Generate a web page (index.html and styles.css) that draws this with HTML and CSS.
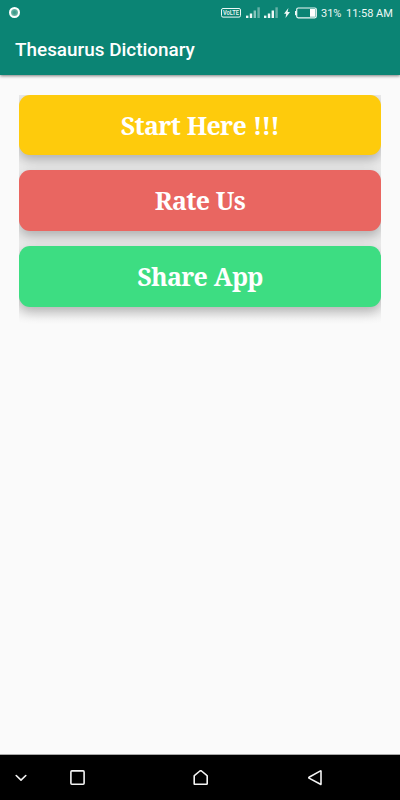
FILE: index.html
```html
<!DOCTYPE html>
<html lang="en">
  <head>
    <meta charset="UTF-8" />
    <meta name="viewport" content="width=device-width, initial-scale=1.0" />
    <title>Thesaurus Dictionary</title>
    <link rel="stylesheet" href="styles.css">
  </head>
  <body>
    <header class="app-bar">
      <div class="status-bar">
        <span class="status-dot"></span>
        <div class="status-icons">
          <svg class="volte" width="20" height="10" viewBox="0 0 20 10">
            <rect x="0.5" y="0.5" width="19" height="8.6" rx="1.5" fill="none" stroke="currentColor" />
            <text x="2" y="7.4" textLength="16" lengthAdjust="spacingAndGlyphs">VoLTE</text>
          </svg>
          <svg class="signal" width="14" height="12" viewBox="0 0 14 12" fill="currentColor">
            <rect x="0" y="8.6" width="2.4" height="2.4" />
            <rect x="3.8" y="6.5" width="2.4" height="4.5" />
            <rect x="7.6" y="3.5" width="2.4" height="7.5" opacity="0.55" />
            <rect x="11.4" y="0.3" width="2.4" height="10.7" opacity="0.4" />
          </svg>
          <svg class="signal second" width="14" height="12" viewBox="0 0 14 12" fill="currentColor">
            <rect x="0" y="8.6" width="2.4" height="2.4" />
            <rect x="3.8" y="6.5" width="2.4" height="4.5" />
            <rect x="7.6" y="3.5" width="2.4" height="7.5" />
            <rect x="11.4" y="0.3" width="2.4" height="10.7" opacity="0.4" />
          </svg>
          <svg class="bolt" width="6" height="10" viewBox="0 0 6 10" fill="currentColor">
            <path d="M4.4 0 0 5.8h2.2L1.5 10 6 4H3.6z" />
          </svg>
          <svg class="battery" width="22" height="12" viewBox="0 0 22 12">
            <rect x="1.7" y="1" width="19.6" height="9.8" rx="1.5" fill="none" stroke="currentColor" stroke-width="1.2" />
            <rect x="0" y="4" width="1.6" height="4.2" fill="currentColor" />
            <rect x="15" y="2" width="5.4" height="7.8" fill="#fff" />
          </svg>
          <span class="percent">31%</span>
          <span class="clock">11:58 AM</span>
        </div>
      </div>
      <h1>Thesaurus Dictionary</h1>
    </header>

    <main>
      <div class="menu">
        <button type="button" class="card start"><span>Start Here !!!</span></button>
        <button type="button" class="card rate"><span>Rate Us</span></button>
        <button type="button" class="card share"><span>Share App</span></button>
      </div>
    </main>

    <nav class="nav-bar">
      <svg class="nav-hide" width="12" height="8" viewBox="0 0 12 8">
        <path d="M1.2 1.5 6 6.1l4.8-4.6" />
      </svg>
      <svg class="nav-recent" width="15" height="16" viewBox="0 0 15 16">
        <rect x="0.9" y="0.9" width="13.2" height="13.4" rx="1" />
      </svg>
      <svg class="nav-home" width="16" height="16" viewBox="0 0 16 16">
        <path d="M1.2 6Q1.2 5.6 1.6 5.3L6.9 1q.8-.6 1.6 0l5.3 4.3q.4.3.4.7v7.7q0 .6-.6.6H1.8q-.6 0-.6-.6z" />
      </svg>
      <svg class="nav-back" width="15" height="16" viewBox="0 0 15 16">
        <path d="M14 1.3v12.8q0 .5-.5.2L2 8.1q-.5-.4 0-.8L13.5.9q.5-.2.5.4z" />
      </svg>
    </nav>
  </body>
</html>
```

FILE: styles.css
```css
:root {
  --primary: #0b8474;
  --background: #fafafa;
  --yellow: #fecb0c;
  --red: #e96661;
  --green: #3ddd82;
}

* {
  margin: 0;
  padding: 0;
  box-sizing: border-box;
}

body {
  height: 100vh;
  display: flex;
  flex-direction: column;
  background-color: var(--background);
  font-family: Roboto, "Liberation Sans", sans-serif;
  overflow: hidden;
}

.app-bar {
  height: 75px;
  background-color: var(--primary);
  color: #fff;
  box-shadow: 0 1px 3px rgba(0, 0, 0, 0.5);
}

.status-bar {
  height: 25px;
  padding: 0 8px 0 9px;
  display: flex;
  align-items: center;
  justify-content: space-between;
  color: #eef8f6;
}

.status-dot {
  width: 11px;
  height: 11px;
  border: 2px solid #fff;
  border-radius: 50%;
  background: radial-gradient(#3f9b8b 20%, #80bfb3 80%);
}

.status-icons {
  display: flex;
  align-items: center;
  font-size: 11px;
  line-height: 26px;
}

.volte text {
  font: 500 6.5px Roboto, sans-serif;
  fill: currentColor;
}

.signal {
  margin-left: 5px;
}

.signal.second {
  margin-left: 4px;
}

.bolt {
  margin: 0 5px 0 6px;
}

.percent {
  width: 21px;
  margin-left: 4px;
  padding-top: 2px;
}

.clock {
  width: 47px;
  margin: 0 -1px 0 4px;
  padding-top: 2px;
  white-space: nowrap;
}

h1 {
  padding-left: 15px;
  font-size: 18.9px;
  font-weight: 500;
  line-height: 50px;
}

main {
  flex: 1;
  padding: 19.5px 19px;
}

/* clips the card shadows at the left and right edges */
.menu {
  height: 230px;
  display: flex;
  flex-direction: column;
  gap: 15px;
  overflow: hidden;
  background: linear-gradient(#ebebeb 0, #ebebeb 205px, var(--background) 228px);
}

.card {
  height: 60.7px;
  flex-shrink: 0;
  border: none;
  border-radius: 11px;
  color: #fff;
  font-family: "Noto Serif", "Droid Serif", "DejaVu Serif Condensed", "DejaVu Serif", serif;
  font-size: 25px;
  font-weight: 700;
  letter-spacing: -0.7px;
  word-spacing: 0.8px;
  line-height: 61px;
  box-shadow: 0 5px 12px rgba(0, 0, 0, 0.26);
}

.start {
  background-color: var(--yellow);
}

.rate {
  background-color: var(--red);
}

.share {
  background-color: var(--green);
}

.nav-bar {
  height: 46px;
  padding: 0 77px 0 15px;
  display: flex;
  align-items: center;
  background-color: #000;
  border-top: 1px solid #aaa;
}

.nav-bar svg {
  fill: none;
  stroke: #f4f4f4;
  stroke-width: 1.6;
  stroke-linecap: round;
  stroke-linejoin: round;
}

.nav-recent {
  margin-left: 43px;
}

.nav-home {
  margin-left: 107.5px;
}

.nav-back {
  margin-left: 98px;
}
```
